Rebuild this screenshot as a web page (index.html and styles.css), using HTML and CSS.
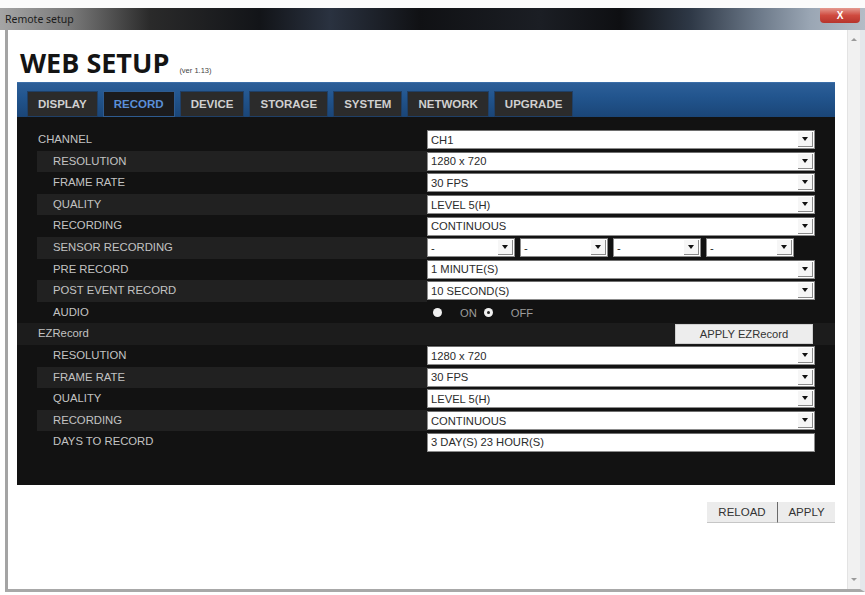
FILE: index.html
```html
<!DOCTYPE html>
<html>
<head>
<meta charset="utf-8">
<title>Remote setup</title>
<link rel="stylesheet" href="styles.css">
</head>
<body>
<div class="topstrip"></div>
<div class="titlebar">
  <span class="title">Remote setup</span>
  <span class="close">X</span>
</div>
<div class="frame">
  <div class="content">
    <h1 class="heading">WEB SETUP<small class="ver">(ver 1.13)</small></h1>
    <div class="panel">
      <div class="tabbar">
        <div class="tab">DISPLAY</div>
        <div class="tab active">RECORD</div>
        <div class="tab">DEVICE</div>
        <div class="tab">STORAGE</div>
        <div class="tab">SYSTEM</div>
        <div class="tab">NETWORK</div>
        <div class="tab">UPGRADE</div>
      </div>
      <div class="rows">
        <div class="row"><div class="label top">CHANNEL</div><div class="ctrl"><div class="select"><span class="val">CH1</span><span class="arrow"></span></div></div></div>
        <div class="row alt"><div class="label">RESOLUTION</div><div class="ctrl"><div class="select"><span class="val">1280 x 720</span><span class="arrow"></span></div></div></div>
        <div class="row"><div class="label">FRAME RATE</div><div class="ctrl"><div class="select"><span class="val">30 FPS</span><span class="arrow"></span></div></div></div>
        <div class="row alt"><div class="label">QUALITY</div><div class="ctrl"><div class="select"><span class="val">LEVEL 5(H)</span><span class="arrow"></span></div></div></div>
        <div class="row"><div class="label">RECORDING</div><div class="ctrl"><div class="select"><span class="val">CONTINUOUS</span><span class="arrow"></span></div></div></div>
        <div class="row alt"><div class="label">SENSOR RECORDING</div>
          <div class="ctrl sensors">
            <div class="select small"><span class="val">-</span><span class="arrow"></span></div>
            <div class="select small"><span class="val">-</span><span class="arrow"></span></div>
            <div class="select small"><span class="val">-</span><span class="arrow"></span></div>
            <div class="select small"><span class="val">-</span><span class="arrow"></span></div>
          </div>
        </div>
        <div class="row"><div class="label">PRE RECORD</div><div class="ctrl"><div class="select"><span class="val">1 MINUTE(S)</span><span class="arrow"></span></div></div></div>
        <div class="row alt"><div class="label">POST EVENT RECORD</div><div class="ctrl"><div class="select"><span class="val">10 SECOND(S)</span><span class="arrow"></span></div></div></div>
        <div class="row"><div class="label">AUDIO</div>
          <div class="ctrl radios">
            <span class="radio"></span><span class="rlabel">ON</span>
            <span class="radio checked"></span><span class="rlabel">OFF</span>
          </div>
        </div>
        <div class="row section"><div class="label top">EZRecord</div><div class="ctrl end"><button class="ezbtn">APPLY EZRecord</button></div></div>
        <div class="row"><div class="label">RESOLUTION</div><div class="ctrl"><div class="select"><span class="val">1280 x 720</span><span class="arrow"></span></div></div></div>
        <div class="row alt"><div class="label">FRAME RATE</div><div class="ctrl"><div class="select"><span class="val">30 FPS</span><span class="arrow"></span></div></div></div>
        <div class="row"><div class="label">QUALITY</div><div class="ctrl"><div class="select"><span class="val">LEVEL 5(H)</span><span class="arrow"></span></div></div></div>
        <div class="row alt"><div class="label">RECORDING</div><div class="ctrl"><div class="select"><span class="val">CONTINUOUS</span><span class="arrow"></span></div></div></div>
        <div class="row"><div class="label">DAYS TO RECORD</div><div class="ctrl"><div class="select text"><span class="val">3 DAY(S) 23 HOUR(S)</span></div></div></div>
      </div>
    </div>
    <div class="actions">
      <button class="btn">RELOAD</button><button class="btn sep">APPLY</button>
    </div>
  </div>
  <div class="scrollbar">
    <span class="sarrow up"></span>
    <span class="sarrow down"></span>
  </div>
</div>
</body>
</html>
```
FILE: styles.css
```css
* { box-sizing: border-box; margin: 0; padding: 0; }
html, body { width: 865px; height: 595px; overflow: hidden; background: #ffffff; }
body { font-family: "Liberation Sans", Arial, sans-serif; }

.topstrip { height: 8px; background: #fbfbfb; }

.titlebar {
  height: 22px;
  display: flex;
  align-items: center;
  padding-left: 5px;
  background: linear-gradient(90deg, #a5a5a5 0, #7a7a7a 70px, #2a2a2a 150px, #121418 260px, #2a3240 330px, #101114 420px, #1b1e24 540px, #0e0f12 620px, #2e3846 690px, #6d7a8a 760px, #9aa6b4 810px, #b4bcc6 865px);
}
.title { font-family: "Noto Sans", "Open Sans", sans-serif; font-size: 10.5px; color: #1b1b1b; }
.close {
  margin-left: auto;
  margin-right: 5px;
  align-self: flex-start;
  width: 40px;
  height: 15px;
  border-radius: 0 0 4px 4px;
  background: linear-gradient(#e49a90, #cf4a3f 50%, #b6342c);
  color: #fff;
  font-size: 10px;
  font-weight: 700;
  line-height: 15px;
  text-align: center;
}

.frame {
  display: flex;
  height: 562px;
  margin-left: 5px;
  border-left: 3px solid #a4a4a4;
  border-bottom: 3px solid #a8a8a8;
  border-right: 5px solid #e4e7eb;
  background: #ffffff;
}
.content { flex: 1; }

.heading {
  height: 32px;
  margin: 16.5px 0 3.5px 12px;
  font-family: "Open Sans", "DejaVu Sans", sans-serif;
  font-weight: 700;
  font-size: 27px;
  line-height: 32px;
  color: #141414;
  white-space: nowrap;
}
.ver {
  margin-left: 10px;
  font-family: "Liberation Sans", Arial, sans-serif;
  font-weight: 400;
  font-size: 7.5px;
  line-height: 1;
  color: #444;
}

.panel {
  width: 818px;
  height: 403px;
  margin-left: 9px;
  background: #121212;
}
.tabbar {
  height: 35px;
  display: flex;
  align-items: flex-end;
  gap: 5px;
  padding-left: 10px;
  background: linear-gradient(#2d5f98 0, #22558e 40%, #1a4577 100%);
  border-top: 1px solid #3b6ea8;
}
.tab {
  height: 26px;
  padding: 0 10px;
  font-weight: 700;
  font-size: 11.5px;
  line-height: 24px;
  color: #d0d0d0;
  background: #2b2b2b;
  border: 1px solid #1f3f66;
}
.tab.active { color: #5a8fd8; background: #1b1b1d; border-color: #2e5b90; }

.rows { padding: 12px 0 32px; }
.row {
  display: flex;
  align-items: center;
  height: 21.6px;
  padding: 0 20px;
}
.row.section { background: #1c1c1c; }
.label {
  width: 390px;
  height: 100%;
  padding-left: 16px;
  font-size: 11.3px;
  line-height: 21.6px;
  color: #c3c3c3;
}
.label.top { padding-left: 1px; }
.row.alt .label { background: #212121; }
.ctrl { width: 388px; display: flex; align-items: center; }
.ctrl.end { justify-content: flex-end; padding-right: 2px; }

.select {
  flex: 1;
  height: 19px;
  display: flex;
  align-items: center;
  padding-left: 3px;
  background: #ffffff;
  border: 1px solid #8c8c8c;
  border-top-color: #6e6e6e;
  font-size: 11.2px;
  color: #2b2b2b;
}
.select .val { flex: 1; white-space: nowrap; }
.arrow {
  width: 15px;
  height: 15px;
  margin-right: 1px;
  background: #f6f6f6;
  border-right: 1px solid #8a8a8a;
  border-bottom: 1px solid #8a8a8a;
  display: flex;
  align-items: center;
  justify-content: center;
}
.arrow::after {
  content: "";
  border-left: 3px solid transparent;
  border-right: 3px solid transparent;
  border-top: 4px solid #111;
}
.sensors { gap: 5px; }
.select.small { flex: 0 0 88px; }

.radios { padding-left: 6px; font-size: 11.2px; color: #9c9c9c; }
.radio {
  width: 9px;
  height: 9px;
  border-radius: 50%;
  background: #f0f0f0;
  display: flex;
  align-items: center;
  justify-content: center;
}
.radio.checked::after {
  content: "";
  width: 3px;
  height: 3px;
  border-radius: 50%;
  background: #222;
}
.rlabel { margin: 0 7px 0 18px; }

.ezbtn {
  width: 138px;
  height: 20px;
  border: 1px solid #d0d0d0;
  background: #ededed;
  font-family: "Liberation Sans", Arial, sans-serif;
  font-size: 11.2px;
  color: #333;
}

.actions {
  width: 818px;
  margin: 17px 0 0 9px;
  display: flex;
  justify-content: flex-end;
}
.btn {
  height: 21px;
  border: none;
  border-bottom: 1px solid #c6c6c6;
  background: #ececec;
  font-family: "Liberation Sans", Arial, sans-serif;
  font-size: 11.5px;
  color: #333;
}
.btn:first-child { width: 70px; }
.btn.sep { width: 58px; border-left: 1px solid #6a6a6a; }

.scrollbar {
  width: 13px;
  display: flex;
  flex-direction: column;
  justify-content: space-between;
  align-items: center;
  padding: 8px 0 8px;
  background: #f1f1f1;
  border-left: 1px solid #e3e3e3;
}
.sarrow { width: 0; height: 0; border-left: 3px solid transparent; border-right: 3px solid transparent; }
.sarrow.up { border-bottom: 3px solid #9a9a9a; }
.sarrow.down { border-top: 3px solid #9a9a9a; }
```
